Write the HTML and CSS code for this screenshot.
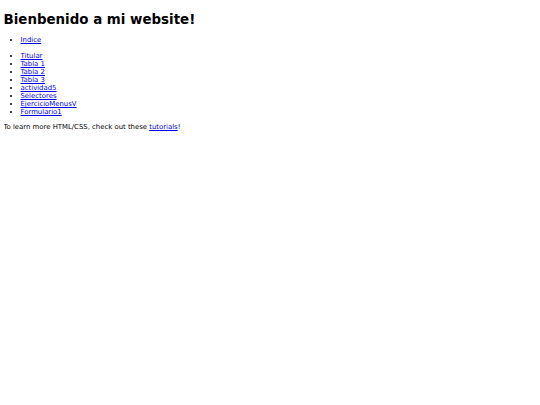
FILE: index.html
```html
<!DOCTYPE html>
<html>
<head>
<meta charset="utf-8">
<link rel="stylesheet" href="styles.css">
</head>
<body>
<h1 class="title">Bienbenido a mi website!</h1>
<ul class="list">
<li><a href="#">Indice</a></li>
</ul>
<ul class="list">
<li><a href="#">Titular</a></li>
<li><a href="#">Tabla 1</a></li>
<li><a href="#">Tabla 2</a></li>
<li><a href="#">Tabla 3</a></li>
<li><a href="#">actividad5</a></li>
<li><a href="#">Selectores</a></li>
<li><a href="#">EjercicioMenusV</a></li>
<li><a href="#">Formulario1</a></li>
</ul>
<p class="note">To learn more HTML/CSS, check out these <a href="#">tutorials</a>!</p>
</body>
</html>
```
FILE: styles.css
```css
html, body {
  background: #ffffff;
}
body {
  margin: 3.5px;
  font-family: "DejaVu Sans", sans-serif;
  font-size: 6.9px;
  line-height: 8px;
  color: #000000;
}
.title {
  font-size: 13.4px;
  line-height: 15.6px;
  font-weight: bold;
  margin: 8px 0 9.4px;
}
.list {
  margin: 7.5px 0;
  padding-left: 17px;
}
.list a,
.note a {
  color: #0000ee;
}
.note {
  margin: 6.5px 0;
}
```
